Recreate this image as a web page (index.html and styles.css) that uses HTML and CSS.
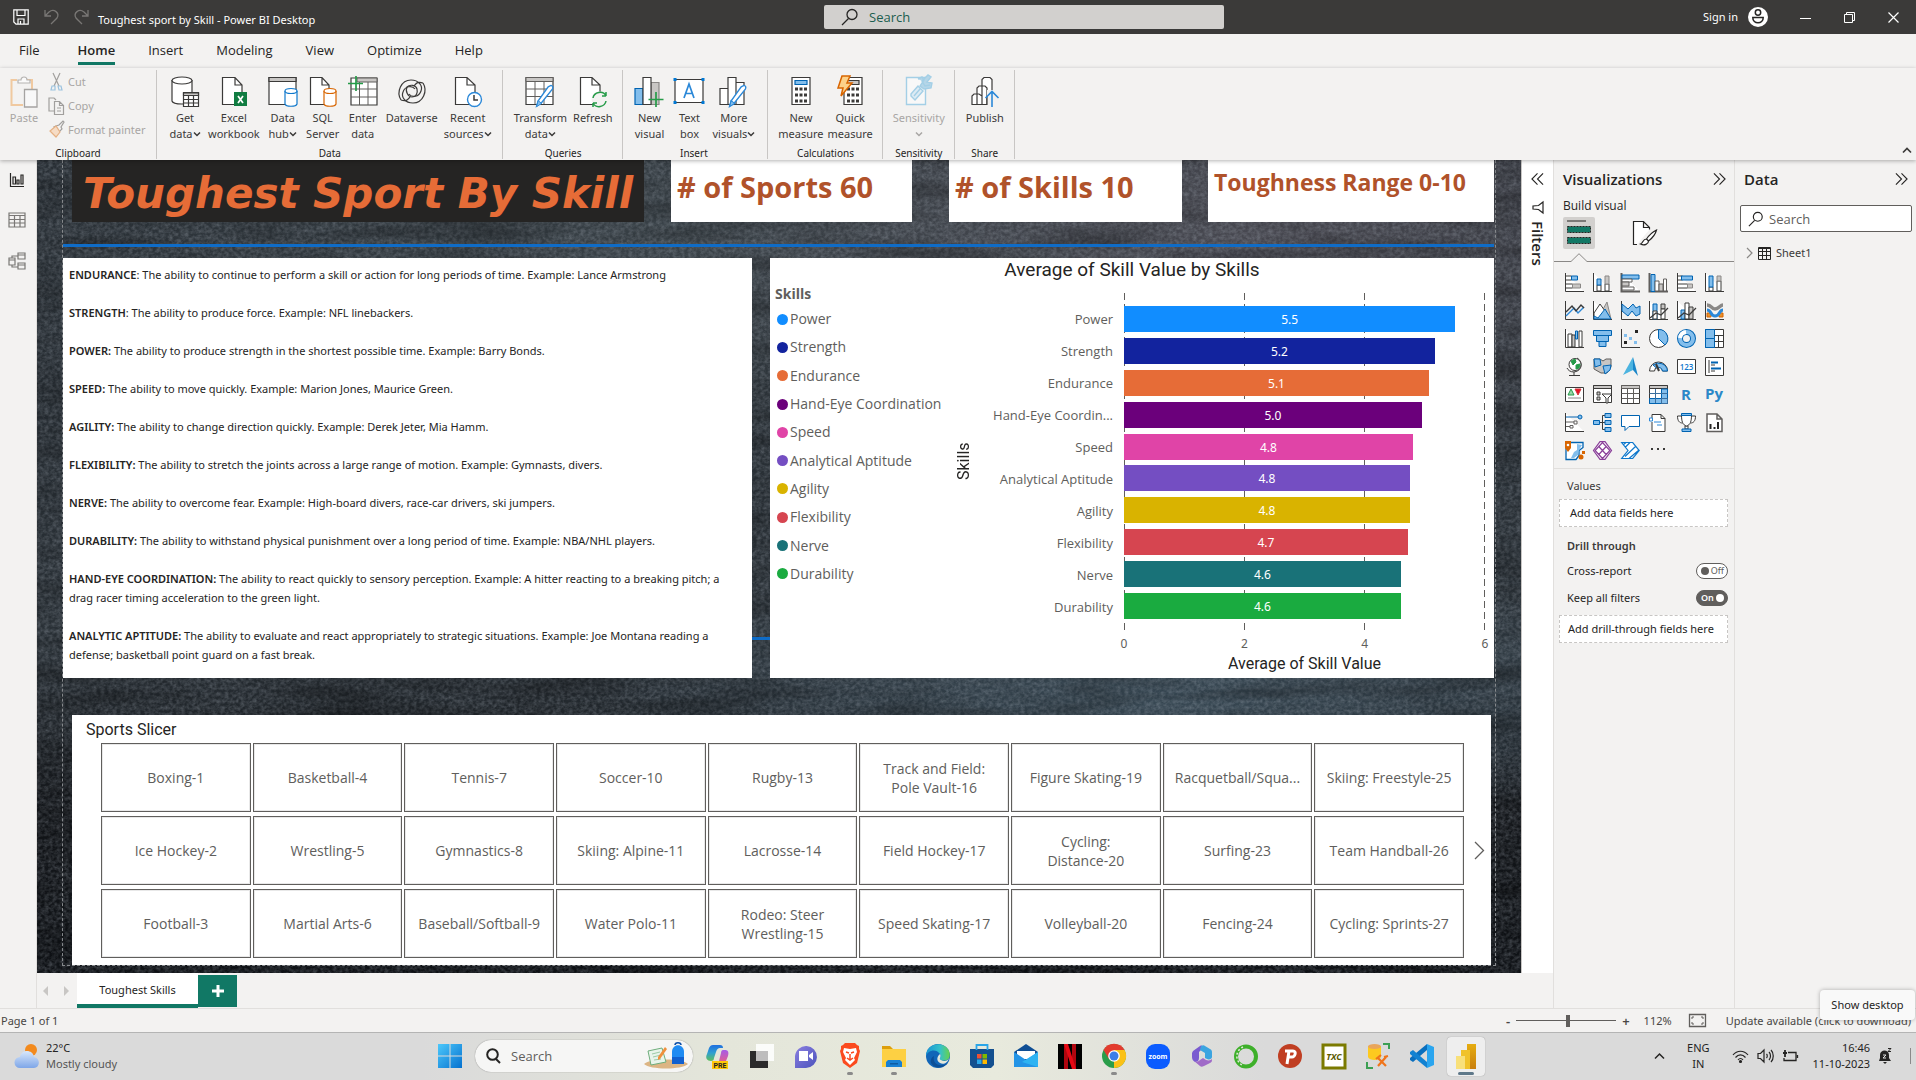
FILE: index.html
```html
<!DOCTYPE html>
<html lang="en">
<head>
<meta charset="utf-8">
<title>Toughest sport by Skill - Power BI Desktop</title>
<link rel="stylesheet" href="styles.css">
</head>
<body>
<svg class="defs" aria-hidden="true">
  <defs>
    <linearGradient id="gWin" x1="0" y1="0" x2="1" y2="1"><stop offset="0" stop-color="#4cc8fb"/><stop offset="1" stop-color="#0571cf"/></linearGradient>
    <linearGradient id="gCopA" x1="0" y1="0" x2="0" y2="1"><stop offset="0" stop-color="#1f6fe0"/><stop offset=".5" stop-color="#2f9fd0"/><stop offset="1" stop-color="#5fc05a"/></linearGradient>
    <linearGradient id="gCopB" x1="0" y1="0" x2="0" y2="1"><stop offset="0" stop-color="#a65be8"/><stop offset="1" stop-color="#f0607a"/></linearGradient>
    <linearGradient id="gChat" x1="0" y1="0" x2="1" y2="1"><stop offset="0" stop-color="#8b7fe0"/><stop offset="1" stop-color="#4b53bc"/></linearGradient>
    <linearGradient id="gEdge" x1="0" y1="0" x2="1" y2="0"><stop offset="0" stop-color="#1795d4"/><stop offset=".6" stop-color="#35c1c9"/><stop offset="1" stop-color="#68d34a"/></linearGradient>
    <linearGradient id="gBi" x1="0" y1="0" x2="0" y2="1"><stop offset="0" stop-color="#e6ad10"/><stop offset="1" stop-color="#c87e0e"/></linearGradient>
    <linearGradient id="gCloud" x1="0" y1="0" x2="0" y2="1"><stop offset="0" stop-color="#d9e8fb"/><stop offset="1" stop-color="#7ea6e8"/></linearGradient>
    <symbol id="chev" viewBox="0 0 8 8"><path d="M1 2.500l3 3 3-3" fill="none" stroke="currentColor" stroke-width="1.500"/></symbol>
    <symbol id="pen" viewBox="0 0 20 26"><path d="M17 1.500c2 .500 2.500 2 1.500 4L7 20l-5.500 4L3 18.500 14 3z" fill="#fff" stroke="#2b88d8" stroke-width="1.500"/><path d="M3 18l4 3-5.500 3.500z" fill="#83beec" stroke="#2b88d8"/></symbol>
    <symbol id="glass" viewBox="0 0 18 18"><circle cx="11" cy="6.500" r="5" fill="none" stroke="currentColor" stroke-width="1.300"/><path d="M7.500 10.500L1 17" stroke="currentColor" stroke-width="1.300"/></symbol>
    <symbol id="dbl" viewBox="0 0 14 14"><path d="M1 1l6 6-6 6M7 1l6 6-6 6" fill="none" stroke="currentColor" stroke-width="1.200"/></symbol>
  </defs>
</svg>

<header class="titlebar">
  <div class="title-left">
    <button class="bare" aria-label="Save"><svg width="16" height="16" viewBox="0 0 16 16" fill="none" stroke="#fff" stroke-width="1.200"><path d="M.8.800h14.400v14.400H3L.8 13z"/><path d="M4 1v5.500h8V1M5 15v-5h6v5M7.500 12v3"/></svg></button>
    <button class="bare" aria-label="Undo"><svg width="15" height="16" viewBox="0 0 15 16" fill="none" stroke="#797775" stroke-width="1.300"><path d="M1 1v6h6M1 7l4-4c5-4 11 1 8 6l-6 6"/></svg></button>
    <button class="bare" aria-label="Redo"><svg width="15" height="16" viewBox="0 0 15 16" fill="none" stroke="#797775" stroke-width="1.300"><path d="M14 1v6H8M14 7l-4-4C5-1-1 4 2 9l6 6"/></svg></button>
    <span class="doc-title">Toughest sport by Skill - Power BI Desktop</span>
  </div>
  <label class="top-search"><svg width="18" height="18"><use href="#glass"/></svg><input type="text" placeholder="Search" aria-label="Search"></label>
  <div class="title-right">
    <button class="bare signin">Sign in</button>
    <svg width="20" height="20" viewBox="0 0 20 20"><circle cx="10" cy="10" r="10" fill="#fff"/><circle cx="10" cy="5.500" r="2.700" fill="none" stroke="#252423" stroke-width="1.500"/><path d="M4.800 10.500h10.400c.3 7-10.700 7-10.400 0z" fill="none" stroke="#252423" stroke-width="1.500"/></svg>
    <div class="win-buttons">
      <button class="bare" aria-label="Minimize"><svg width="11" height="11"><path d="M0 6.500h11" stroke="#fff"/></svg></button>
      <button class="bare" aria-label="Restore"><svg width="11" height="11" fill="none" stroke="#fff"><path d="M.5 2.500h8v8h-8zM2.500 2V.500h8v8H9"/></svg></button>
      <button class="bare" aria-label="Close"><svg width="11" height="11"><path d="M.5.500l10 10M10.500.500l-10 10" stroke="#fff" stroke-width="1.200"/></svg></button>
    </div>
  </div>
</header>

<nav class="tabs">
  <a href="#file" class="file">File</a><a href="#home" class="active">Home</a><a href="#insert">Insert</a><a href="#modeling">Modeling</a><a href="#view">View</a><a href="#optimize">Optimize</a><a href="#help">Help</a>
</nav>

<section class="ribbon">
  <div class="group clip">
    <div class="group-body">
      <button class="rb off"><svg width="28" height="32" viewBox="0 0 28 32" fill="none" stroke="#f0c9a0" stroke-width="2"><path d="M7 4H1.500v25H13M17 4h5v9"/><path d="M8 7V4h3c0-4 6-4 6 0h3v3z" stroke="#b5b3b1" stroke-width="1.200" fill="#fafafa"/><path d="M14.500 13.500H27v17.500H14.500z" stroke="#a5a3a1" stroke-width="1.300" fill="#f8f8f8"/></svg><span>Paste</span></button>
      <div class="mini">
        <button class="mb"><svg width="17" height="20" viewBox="0 0 17 20" fill="none" stroke="#a19f9d" stroke-width="1.200"><path d="M5 1l6 13M12 1L6 14"/><path d="M4 14h3v4H3zM10 14h3l1 4h-3z" stroke="#9cc3e0"/></svg>Cut</button>
        <button class="mb"><svg width="17" height="20" viewBox="0 0 17 20" fill="none" stroke="#a19f9d" stroke-width="1.200"><path d="M6 15H1V2h5l2 2"/><path d="M6.500 5.500h5l4 4v9h-9zM11.500 5.500v4h4M9 12h4M9 15h4"/></svg>Copy</button>
        <button class="mb"><svg width="17" height="20" viewBox="0 0 17 20" fill="none" stroke="#a19f9d" stroke-width="1.200"><path d="M8 6l3-1 4-4 1 1-3 5 1 2-3 3-5-5z"/><path d="M8 6l-6 5 6 6 4-5z" stroke="#e5b184" fill="#f6dcc5"/></svg>Format painter</button>
      </div>
    </div>
    <div class="group-name">Clipboard</div>
  </div>
  <div class="group">
    <div class="group-body">
      <button class="rb"><svg width="28" height="32" viewBox="0 0 28 32" fill="#fff" stroke="#3b3a39" stroke-width="1.200"><path d="M1 4v21c1 4 19 4 20 0V4"/><ellipse cx="11" cy="4.500" rx="10" ry="3.500"/><path d="M12.500 16.500h15v14h-15z"/><path d="M12.500 17h15v2.500h-15z" fill="#c8c6c4"/><path d="M12.500 23.500h15M12.500 27h15M17.500 20v10M22.500 20v10"/></svg><span>Get</span><span>data<svg class="cv"><use href="#chev"/></svg></span></button>
      <button class="rb"><svg width="28" height="32" viewBox="0 0 28 32" fill="#fff" stroke="#3b3a39" stroke-width="1.200"><path d="M15 1.500H2.500v27H22V9zM15 1.500V9h7"/><path d="M14 16h13v14H14z" fill="#107c41" stroke="none"/><path d="M18 20l5 7M23 20l-5 7" stroke-width="1.700" stroke="#fff"/></svg><span>Excel</span><span>workbook</span></button>
      <button class="rb"><svg width="30" height="32" viewBox="0 0 30 32" fill="#fff" stroke="#3b3a39" stroke-width="1.200"><path d="M1 1.500h27v27H1z"/><path d="M1 1.500h27v4H1z" fill="#c8c6c4"/><path d="M17 15v13c1 3 11 3 12 0V15" stroke="#0f78cc"/><ellipse cx="23" cy="15" rx="6" ry="2.500" stroke="#0f78cc"/></svg><span>Data</span><span>hub<svg class="cv"><use href="#chev"/></svg></span></button>
      <button class="rb"><svg width="28" height="32" viewBox="0 0 28 32" fill="#fff" stroke="#3b3a39" stroke-width="1.200"><path d="M13 1.500H1.500v27H20V9zM13 1.500V9h7"/><path d="M15 15v13c1 3 11 3 12 0V15" stroke="#d86500"/><ellipse cx="21" cy="15" rx="6" ry="2.500" stroke="#d86500"/></svg><span>SQL</span><span>Server</span></button>
      <button class="rb"><svg width="30" height="32" viewBox="0 0 30 32" fill="#fff" stroke="#605e5c" stroke-width="1"><path d="M3 2h26v27H3z" stroke="#3b3a39" stroke-width="1.200"/><path d="M9 2h20v4H9z" fill="#c8c6c4"/><path d="M3 13h26M3 21h26M11.500 6v23M20 6v23"/><path d="M8 0v15M0 7.500h15" stroke="#259b48" stroke-width="1.700"/></svg><span>Enter</span><span>data</span></button>
      <button class="rb"><svg width="30" height="32" viewBox="0 0 30 32" fill="none" stroke="#3b3a39" stroke-width="1.200"><path d="M4 24C-1 16 4 4 14 4c8 0 12 6 10 11-2 6-9 7-12 3M26 7c5 8 0 20-10 20-8 0-12-6-10-11 2-6 9-7 12-3"/><path d="M4 24c6 2 7-1 9-3M26 7c-6-2-7 1-9 3"/><path d="M10 11c3-3 9-2 10 2s-1 8-5 8-7-6-5-10z"/></svg><span>Dataverse</span></button>
      <button class="rb"><svg width="28" height="32" viewBox="0 0 28 32" fill="#fff" stroke="#3b3a39" stroke-width="1.200"><path d="M13 1.500H1.500v27H21V9zM13 1.500V9h8"/><circle cx="20.500" cy="23.500" r="7" stroke="#2b88d8" stroke-width="1.400"/><path d="M20 19v5h4" fill="none" stroke-width="1.500"/></svg><span>Recent</span><span>sources<svg class="cv"><use href="#chev"/></svg></span></button>
    </div>
    <div class="group-name">Data</div>
  </div>
  <div class="group">
    <div class="group-body">
      <button class="rb"><svg width="30" height="32" viewBox="0 0 30 32" fill="#fff" stroke="#605e5c"><path d="M1 1.500h27v27H1z" stroke="#3b3a39" stroke-width="1.200"/><path d="M1 1.500h27v4H1z" fill="#c8c6c4"/><path d="M1 13h27M1 20.500h27M10 6v22M19 6v22"/><use href="#pen" x="9" y="8" width="21" height="24"/></svg><span>Transform</span><span>data<svg class="cv"><use href="#chev"/></svg></span></button>
      <button class="rb"><svg width="28" height="32" viewBox="0 0 28 32" fill="#fff" stroke="#3b3a39" stroke-width="1.200"><path d="M13 1.500H1.500v27H21V9zM13 1.500V9h8"/><circle cx="20.500" cy="23.500" r="8" fill="#f3f2f1" stroke="none"/><path d="M14 22c1-6 10-8 13-2v-4M27 20h-4M27 25c-1 6-10 8-13 2v4M14 27h4" fill="none" stroke="#259b48" stroke-width="1.500"/></svg><span>Refresh</span></button>
    </div>
    <div class="group-name">Queries</div>
  </div>
  <div class="group insert">
    <div class="group-body">
      <button class="rb"><svg width="30" height="32" viewBox="0 0 30 32" fill="#fff" stroke="#3b3a39" stroke-width="1.200"><path d="M17 6.500h8v22h-8z" fill="#c8c6c4" stroke="#8a8886"/><path d="M1 12.500h8v16H1z" fill="#83beec" stroke="#0063b1"/><path d="M9 1.500h8v27H9z"/><path d="M22 16v15M14.500 23.500h15" stroke="#259b48" stroke-width="1.700"/></svg><span>New</span><span>visual</span></button>
      <button class="rb"><svg width="32" height="32" viewBox="0 0 32 32" fill="#fff" stroke="#3b3a39" stroke-width="1.200"><path d="M2 3.500h28v23H2z"/><path d="M11 22l5-14 5 14M13 17.500h6" fill="none" stroke="#2b88d8" stroke-width="1.700"/><path d="M.5 2h3v3h-3zM28.500 2h3v3h-3zM.5 25h3v3h-3zM28.500 25h3v3h-3z" fill="#0078d4" stroke="none"/></svg><span>Text</span><span>box</span></button>
      <button class="rb"><svg width="30" height="32" viewBox="0 0 30 32" fill="#fff" stroke="#3b3a39" stroke-width="1.200"><path d="M17 6.500h8v22h-8zM1 12.500h8v16H1zM9 1.500h8v27H9z"/><use href="#pen" x="8" y="8" width="21" height="24"/></svg><span>More</span><span>visuals<svg class="cv"><use href="#chev"/></svg></span></button>
    </div>
    <div class="group-name">Insert</div>
  </div>
  <div class="group tight">
    <div class="group-body">
      <button class="rb"><svg width="20" height="32" viewBox="0 0 20 32" fill="#fff" stroke="#3b3a39" stroke-width="1.200"><path d="M1 1.500h18v27H1z"/><path d="M4 4.500h12v4H4z" fill="#83beec" stroke="#0063b1"/><path d="M4 13h12M4 19h12M4 25h12" stroke-width="3" stroke-dasharray="3 1.500"/></svg><span>New</span><span>measure</span></button>
      <button class="rb"><svg width="28" height="32" viewBox="0 0 28 32" fill="#fff" stroke="#3b3a39" stroke-width="1.200"><path d="M8 1.500h18v27H8z"/><path d="M11 4.500h12v4H11z" fill="#c8c6c4"/><path d="M11 13h12M11 19h12M11 25h12" stroke-width="3" stroke-dasharray="3 1.500"/><path d="M6 0h8l-3 7h5L5 20l2-8H2z" fill="#fcd28a" stroke="#d86500" stroke-width="1.500"/></svg><span>Quick</span><span>measure</span></button>
    </div>
    <div class="group-name">Calculations</div>
  </div>
  <div class="group tight">
    <div class="group-body">
      <button class="rb off"><svg width="28" height="32" viewBox="0 0 28 32" fill="#f8f8f8" stroke="#a3cfe6" stroke-width="1.400"><path d="M1.500 1.500h19v27h-19z"/><path d="M6 18l7-8 5 5-8 9-4-4zM9 20l6-7" fill="#dcebf4"/><path d="M13 3l4-2 2 3-4 6 4 3 7-1 1-5-5-1 4-5-3-2-6 6 3 5 5-1" fill="#b5d6e8"/></svg><span>Sensitivity</span><span><svg class="cv"><use href="#chev"/></svg></span></button>
    </div>
    <div class="group-name">Sensitivity</div>
  </div>
  <div class="group">
    <div class="group-body">
      <button class="rb"><svg width="28" height="32" viewBox="0 0 28 32" fill="#fff" stroke="#3b3a39" stroke-width="1.200"><path d="M11 28.500v-25l2-2h6l2 2v25zM6 28.500V12l2-2h6l2 2v16.500zM1 28.500V20l2-2h5l3 2v8.500z"/><path d="M16 14h9v16h-9z" fill="#f3f2f1" stroke="none"/><path d="M11 28.500h5V20" fill="none"/><path d="M21 31V16M14.500 22l6.500-6.500 6.500 6.500" stroke="#2b88d8" stroke-width="1.600" fill="none"/></svg><span>Publish</span></button>
    </div>
    <div class="group-name">Share</div>
  </div>
  <button class="bare collapse" aria-label="Collapse ribbon"><svg width="10" height="8"><path d="M1 6.500l4-4 4 4" fill="none" stroke="#3b3a39" stroke-width="1.700"/></svg></button>
</section>

<main class="work">
  <nav class="rail">
    <button class="bare" aria-label="Report view"><svg width="16" height="16" viewBox="0 0 16 16" fill="none" stroke="#252423" stroke-width="1.200"><path d="M1.500 1v13.500H15M4 5h2.500v7H4zM8 8h2v4H8zM12 3h2v9h-2z"/></svg></button>
    <button class="bare" aria-label="Table view"><svg width="18" height="16" viewBox="0 0 18 16" fill="none" stroke="#797775" stroke-width="1.200"><path d="M1 1h16v14H1zM1 3.500h16M1 7.500h16M1 11h16M6.500 3.500V15M12 3.500V15"/></svg></button>
    <button class="bare" aria-label="Model view"><svg width="18" height="18" viewBox="0 0 18 18" fill="none" stroke="#797775" stroke-width="1.200"><path d="M10 1h7v6h-7zM10 3h7M1 6h6v7H1zM1 8h6M10 11h7v6h-7zM10 13h7M4 6V4h6M4 13v2h6"/></svg></button>
  </nav>

  <div class="center">
    <div class="stage">
      <div class="canvas">
        <svg class="grain" width="100%" height="100%" aria-hidden="true">
          <filter id="fine" x="0" y="0" width="100%" height="100%"><feTurbulence type="fractalNoise" baseFrequency=".25 .3" numOctaves="3" seed="4"/><feColorMatrix values="0 0 0 0 .5  0 0 0 0 .55  0 0 0 0 .62  .8 0 0 0 -.24"/></filter>
          <filter id="weave" x="0" y="0" width="100%" height="100%"><feTurbulence type="fractalNoise" baseFrequency=".008 .05" numOctaves="3" seed="9"/><feColorMatrix values="0 0 0 0 0  0 0 0 0 0  0 0 0 0 0  1 0 0 0 -.4"/></filter>
          <rect width="100%" height="100%" filter="url(#fine)"/>
          <rect width="100%" height="100%" filter="url(#weave)"/>
        </svg>
        <div class="page">
          <div class="row-top">
            <h1 class="banner">Toughest Sport By Skill</h1>
            <div class="card">#&nbsp;of Sports 60</div>
            <div class="card">#&nbsp;of Skills 10</div>
            <div class="card small">Toughness Range 0-10</div>
          </div>
          <div class="rule"></div>
          <div class="row-mid">
            <div class="notes">
              <p><b>ENDURANCE</b>: The ability to continue to perform a skill or action for long periods of time. Example: Lance Armstrong</p>
              <p><b>STRENGTH</b>: The ability to produce force. Example: NFL linebackers.</p>
              <p><b>POWER:</b> The ability to produce strength in the shortest possible time. Example: Barry Bonds.</p>
              <p><b>SPEED:</b> The ability to move quickly. Example: Marion Jones, Maurice Green.</p>
              <p><b>AGILITY:</b> The ability to change direction quickly. Example: Derek Jeter, Mia Hamm.</p>
              <p><b>FLEXIBILITY:</b> The ability to stretch the joints across a large range of motion. Example: Gymnasts, divers.</p>
              <p><b>NERVE:</b> The ability to overcome fear. Example: High-board divers, race-car drivers, ski jumpers.</p>
              <p><b>DURABILITY:</b> The ability to withstand physical punishment over a long period of time. Example: NBA/NHL players.</p>
              <p><b>HAND-EYE COORDINATION:</b> The ability to react quickly to sensory perception. Example: A hitter reacting to a breaking pitch; a drag racer timing acceleration to the green light.</p>
              <p><b>ANALYTIC APTITUDE:</b> The ability to evaluate and react appropriately to strategic situations. Example: Joe Montana reading a defense; basketball point guard on a fast break.</p>
            </div>
            <div class="link"></div>
            <div class="chart">
              <h2>Average of Skill Value by Skills</h2>
              <div class="chart-body">
                <div class="legend">
                  <strong>Skills</strong>
                  <ul>
                    <li><i class="c1"></i>Power</li><li><i class="c2"></i>Strength</li><li><i class="c3"></i>Endurance</li><li><i class="c4"></i>Hand-Eye Coordination</li><li><i class="c5"></i>Speed</li><li><i class="c6"></i>Analytical Aptitude</li><li><i class="c7"></i>Agility</li><li><i class="c8"></i>Flexibility</li><li><i class="c9"></i>Nerve</li><li><i class="c10"></i>Durability</li>
                  </ul>
                </div>
                <div class="y-title">Skills</div>
                <ul class="y-labels"><li>Power</li><li>Strength</li><li>Endurance</li><li>Hand-Eye Coordin...</li><li>Speed</li><li>Analytical Aptitude</li><li>Agility</li><li>Flexibility</li><li>Nerve</li><li>Durability</li></ul>
                <div class="plot-col">
                  <div class="plot">
                    <div class="bar c1" style="width:91.800%">5.5</div>
                    <div class="bar c2" style="width:86.100%">5.2</div>
                    <div class="bar c3" style="width:84.500%">5.1</div>
                    <div class="bar c4" style="width:82.500%">5.0</div>
                    <div class="bar c5" style="width:80%">4.8</div>
                    <div class="bar c6" style="width:79.200%">4.8</div>
                    <div class="bar c7" style="width:79.200%">4.8</div>
                    <div class="bar c8" style="width:78.600%">4.7</div>
                    <div class="bar c9" style="width:76.700%">4.6</div>
                    <div class="bar c10" style="width:76.700%">4.6</div>
                  </div>
                  <div class="ticks"><span>0</span><span>2</span><span>4</span><span>6</span></div>
                  <div class="x-title">Average of Skill Value</div>
                </div>
              </div>
            </div>
          </div>
          <div class="slicer">
            <h2>Sports Slicer</h2>
            <div class="slicer-body">
              <div class="tiles">
                <button>Boxing-1</button><button>Ice Hockey-2</button><button>Football-3</button>
                <button>Basketball-4</button><button>Wrestling-5</button><button>Martial Arts-6</button>
                <button>Tennis-7</button><button>Gymnastics-8</button><button>Baseball/Softball-9</button>
                <button>Soccer-10</button><button>Skiing: Alpine-11</button><button>Water Polo-11</button>
                <button>Rugby-13</button><button>Lacrosse-14</button><button>Rodeo: Steer<br>Wrestling-15</button>
                <button>Track and Field:<br>Pole Vault-16</button><button>Field Hockey-17</button><button>Speed Skating-17</button>
                <button>Figure Skating-19</button><button>Cycling:<br>Distance-20</button><button>Volleyball-20</button>
                <button>Racquetball/Squa...</button><button>Surfing-23</button><button>Fencing-24</button>
                <button>Skiing: Freestyle-25</button><button>Team Handball-26</button><button>Cycling: Sprints-27</button>
              </div>
              <button class="bare next" aria-label="Next"><svg width="11" height="19"><path d="M1 1l8.500 8.500L1 18" fill="none" stroke="#605e5c" stroke-width="1.300"/></svg></button>
            </div>
          </div>
        </div>
      </div>
      <aside class="filters">
        <svg class="flip" width="13" height="14"><use href="#dbl"/></svg>
        <svg width="12" height="13" viewBox="0 0 12 13"><path d="M11 1v11L6.500 8.500 1 8V5l5.500-.500z" fill="none" stroke="#252423" stroke-width="1.200"/></svg>
        <span>Filters</span>
      </aside>
    </div>
    <div class="page-tabs">
      <button class="bare" aria-label="Previous page"><svg width="5" height="10"><path d="M5 0v10L0 5z" fill="#c8c6c4"/></svg></button>
      <button class="bare" aria-label="Next page"><svg width="5" height="10"><path d="M0 0v10l5-5z" fill="#c8c6c4"/></svg></button>
      <button class="page-tab">Toughest Skills</button>
      <button class="add-page" aria-label="New page"><svg width="12" height="12"><path d="M6 0v12M0 6h12" stroke="#fff" stroke-width="3"/></svg></button>
    </div>
  </div>

  <aside class="pane viz">
    <div class="pane-head"><h2>Visualizations</h2><svg width="13" height="14"><use href="#dbl"/></svg></div>
    <h3>Build visual</h3>
    <div class="modes">
      <button class="mode on" aria-label="Build visual"><svg width="24" height="26" viewBox="0 0 24 26"><path d="M0 1h19" stroke="#252423"/><path d="M.5 6.500h23v6H.5zM.5 17.500h23v6H.5z" fill="#117865" stroke="#252423" stroke-dasharray="2 1"/></svg></button>
      <button class="mode" aria-label="Format visual"><svg width="26" height="26" viewBox="0 0 26 26" fill="#fff" stroke="#252423" stroke-width="1.200"><path d="M5 24.500H1.500v-23h10l6 6v2M11.500 1.500v6h6"/><path d="M24.500 10c-4 2-8 6-10 9l2 2c4-3 7-7 8-11zM14.500 19c-4 0-3 4-6 5 4 2 8 0 8-3z"/></svg></button>
    </div>
    <div class="notch"><svg width="16" height="9" viewBox="0 0 16 9" aria-hidden="true"><path d="M0 8.500h16" stroke="#f3f2f1" stroke-width="2"/><path d="M0 8.500L8 .700l8 7.800" fill="none" stroke="#8a8886"/></svg></div>
    <div class="gallery">
      <svg viewBox="0 0 19 19" fill="#fff" stroke="#3b3a39"><path d="M.5 0v18.500H19"/><path d="M.5 3h6v4h-6zM.5 11h7v4h-7z"/><path d="M6.500 3h6v4h-6z" fill="#83beec" stroke="#0063b1"/><path d="M7.500 11h8v4h-8z" fill="#c8c6c4" stroke="#8a8886"/></svg>
      <svg viewBox="0 0 19 19" fill="#fff" stroke="#3b3a39"><path d="M.5 0v18.500H19"/><path d="M4 12h4v6H4zM12 11h4v7h-4z"/><path d="M4 6h4v6H4z" fill="#83beec" stroke="#0063b1"/><path d="M12 3h4v8h-4z" fill="#c8c6c4" stroke="#8a8886"/></svg>
      <svg viewBox="0 0 19 19" fill="#fff" stroke="#605e5c"><path d="M.5 0v18.500H19" stroke-width="2"/><path d="M1 2h17v4H1z" fill="#83beec" stroke="#0063b1"/><path d="M1 6h10v3H1zM1 14h12v3H1z"/><path d="M1 9h7v4H1z" fill="#c8c6c4"/></svg>
      <svg viewBox="0 0 19 19" fill="#fff" stroke="#605e5c"><path d="M.5 0v18.500H19" stroke-width="2"/><path d="M2 1.500h4v17H2z" fill="#83beec" stroke="#0063b1"/><path d="M6 8h4v10H6zM14.500 6h3v12h-3z"/><path d="M10 11h4v7h-4z" fill="#c8c6c4"/></svg>
      <svg viewBox="0 0 19 19" fill="#fff" stroke="#3b3a39"><path d="M.5 0v18.500H19"/><path d="M.5 3h5v4h-5zM.5 11h10v4H.5z"/><path d="M4.500 3h11v4h-11z" fill="#83beec" stroke="#0063b1"/><path d="M10.500 11h5v4h-5z" fill="#c8c6c4" stroke="#8a8886"/></svg>
      <svg viewBox="0 0 19 19" fill="#fff" stroke="#3b3a39"><path d="M.5 0v18.500H19"/><path d="M4 14h4v4H4zM12 8h4v10h-4z"/><path d="M4 3h4v11H4z" fill="#83beec" stroke="#0063b1"/><path d="M12 3h4v5h-4z" fill="#c8c6c4" stroke="#8a8886"/></svg>

      <svg viewBox="0 0 19 19" fill="none" stroke="#3b3a39"><path d="M.5 0v18.500H19"/><path d="M1 15l8-8 4 5 6-6" stroke="#2b88d8" stroke-width="1.400"/><path d="M1 11l6-6 4 5 5-6 3 3" stroke-width="1.400"/></svg>
      <svg viewBox="0 0 19 19" fill="#fff" stroke="#3b3a39"><path d="M.5 0v18.500H19"/><path d="M9 10l5-9 4 17z" fill="#c8c6c4" stroke="#8a8886"/><path d="M1 12l6-9 5 7-6 8H1z"/><path d="M1 15l4 2 7-9 6 10H1z" fill="#83beec" stroke="#0063b1"/></svg>
      <svg viewBox="0 0 19 19" fill="none" stroke="#3b3a39"><path d="M.5 0v18.500H19"/><path d="M1 3l6 5 5-5 3 4 4-2v8l-4 2-4-5-4 5-6-5z" fill="#83beec" stroke="#0063b1"/></svg>
      <svg viewBox="0 0 19 19" fill="#fff" stroke="#3b3a39"><path d="M.5 0v18.500H19"/><path d="M4 3h4v15H4z" fill="#83beec" stroke="#0063b1"/><path d="M12 3h4v5h-4z" fill="#c8c6c4"/><path d="M12 8h4v10h-4zM4 10h4v8H4z"/><path d="M1 17l6-5 5 2 7-7" fill="none" stroke-width="1.300"/></svg>
      <svg viewBox="0 0 19 19" fill="#fff" stroke="#3b3a39"><path d="M.5 0v18.500H19"/><path d="M4 9h4v9H4z" fill="#83beec" stroke="#0063b1"/><path d="M8 2h4v16H8z"/><path d="M12 6h4v12h-4z" fill="#c8c6c4"/><path d="M1 17l6-5 5 2 7-7" fill="none" stroke-width="1.300"/></svg>
      <svg viewBox="0 0 19 19" fill="none" stroke="#3b3a39"><path d="M.5 0v18.500H19"/><path d="M2 12h4v4H2zM14 12h4v4h-4z" fill="#e8912d" stroke="#d86500"/><path d="M2 4c5 0 4 4 8 4s5-4 8-4" stroke="#8a8886" stroke-width="3.500"/><path d="M2 9c5 0 3 6 8 6s4-6 8-6" stroke="#2b88d8" stroke-width="3"/></svg>

      <svg viewBox="0 0 19 19" fill="#fff" stroke="#3b3a39"><path d="M.5 0v18.500H19"/><path d="M3 5h4v13H3zM14 2h3v16h-3z"/><path d="M7 6h3v12H7z" fill="#c8c6c4"/><path d="M10.500 2h2v8h-2z" fill="#83beec" stroke="#0063b1"/></svg>
      <svg viewBox="0 0 19 19" fill="#83beec" stroke="#0063b1"><path d="M.5 1.500h18v5H.5zM3.500 6.500h12v6h-12zM6 12.500h7v5H6z"/></svg>
      <svg viewBox="0 0 19 19" fill="none" stroke="#3b3a39"><path d="M.5 0v18.500H19"/><path d="M3 5h3v3H3zM8 8h3v3H8zM13 12h3v3h-3z" fill="#83beec" stroke="none"/><path d="M14 1h3v3h-3zM3 12h3v3H3z" fill="#252423" stroke="none"/></svg>
      <svg viewBox="0 0 19 19" fill="#fff" stroke="#3b3a39"><circle cx="9.500" cy="9.500" r="9"/><path d="M9.500.500a9 9 0 0 1 6.500 15.500L9.500 9.500z" fill="#83beec" stroke="#0063b1"/></svg>
      <svg viewBox="0 0 19 19" fill="none"><circle cx="9.500" cy="9.500" r="6.500" stroke="#0063b1" stroke-width="6"/><circle cx="9.500" cy="9.500" r="6.500" stroke="#83beec" stroke-width="4"/><path d="M3 9A7 7 0 0 1 9 3" stroke="#fff" stroke-width="4"/></svg>
      <svg viewBox="0 0 19 19" fill="#fff" stroke="#3b3a39"><path d="M.5.500h18v18H.5z"/><path d="M.5.500h9v9h-9zM.5 9.500h9v9h-9z" fill="#83beec" stroke="#0063b1"/><path d="M9.500 6.500h9M9.500 12.500h9M13.500 6.500v12"/></svg>

      <svg viewBox="0 0 19 19" fill="#fff" stroke="#3b3a39"><path d="M12 1c6 3 6 13-3 14-4 0-6-2-7-4M9 15v3M4 18.500h11" fill="none"/><circle cx="10" cy="7.500" r="6"/><path d="M6 4l4-2 1 3-3 3zM11 8l4-1-1 4-3 1z" fill="#259b48" stroke="#259b48"/></svg>
      <svg viewBox="0 0 19 19" fill="#c8c6c4" stroke="#605e5c"><path d="M1 2h6l3 2 3-2h5v8l-4 6H8L1 12z"/><path d="M1 2h6l1 6-6 2zM10 9l8-1-1 5-5 4z" fill="#83beec" stroke="#0063b1"/></svg>
      <svg viewBox="0 0 19 19"><path d="M12 0L2 18l10-5z" fill="#4cb4e0"/><path d="M12 0l5 19-5-6z" fill="#1a86c8"/></svg>
      <svg viewBox="0 0 19 19" fill="#fff" stroke="#3b3a39"><path d="M.5 14a9 9 0 0 1 18 0h-5a4 4 0 0 0-8 0z"/><path d="M4 8a9 9 0 0 1 14.500 6h-5a4 4 0 0 0-6-3z" fill="#83beec" stroke="#0063b1"/><path d="M10 14L7 7" stroke-width="2"/></svg>
      <svg viewBox="0 0 19 19" fill="#fff" stroke="#3b3a39"><path d="M.5 2.500h18v14H.5z"/><text x="9.500" y="13" text-anchor="middle" class="n123">123</text></svg>
      <svg viewBox="0 0 19 19" fill="#fff" stroke="#3b3a39"><path d="M.5.500h18v18H.5zM4 3v13"/><path d="M6 5.500h7M6 11.500h10" stroke="#0063b1" stroke-width="2"/><path d="M6 8h4M6 14h4"/></svg>

      <svg viewBox="0 0 19 19" fill="#fff" stroke="#3b3a39"><path d="M.5 2.500h18v14H.5z"/><path d="M3 10l3-6 3 6z" fill="#9bd3a8" stroke="#259b48"/><path d="M10 4h6l-3 6z" fill="#e81123" stroke="#d13438"/><path d="M3 13h13" stroke="#8a8886"/></svg>
      <svg viewBox="0 0 19 19" fill="#fff" stroke="#3b3a39"><path d="M.5.500h18v17H.5z"/><path d="M.5.500h18v3H.5z" fill="#c8c6c4"/><path d="M4 7h3v3H4zM4 12h3v3H4z" fill="#c8c6c4"/><path d="M9 9h10l-4 4v5h-2v-5z"/></svg>
      <svg viewBox="0 0 19 19" fill="#fff" stroke="#605e5c"><path d="M.5.500h18v18H.5z" stroke="#3b3a39"/><path d="M.5.500h18v3H.5z" fill="#c8c6c4"/><path d="M.5 8.500h18M.5 13.500h18M6.500 4v14M12.500 4v14"/></svg>
      <svg viewBox="0 0 19 19" fill="#fff" stroke="#3b3a39"><path d="M.5.500h18v18H.5z"/><path d="M.5.500h18v3H.5z" fill="#c8c6c4"/><path d="M12.500 4h6v14.500H.5v-5h12z" fill="#83beec" stroke="#0063b1"/><path d="M.5 8.500h18M6.500 4v14M12.500 13.500h6v5h-6z" fill="none" stroke="#3b6f9e"/></svg>
      <svg viewBox="0 0 19 19"><text x="9" y="15" text-anchor="middle" class="nR">R</text></svg>
      <svg viewBox="0 0 19 19"><text x="9" y="14" text-anchor="middle" class="nR">Py</text></svg>

      <svg viewBox="0 0 19 19" fill="#fff" stroke="#3b3a39"><path d="M.5 0v18.500H19"/><path d="M1 4h12" stroke="#0063b1"/><path d="M1 9h9M1 13.500h5" stroke="#605e5c"/><circle cx="15" cy="4" r="2" fill="#83beec" stroke="#0063b1"/><path d="M9 8h3v3H9zM5 12.500h3v2.500H5z" stroke="#605e5c"/></svg>
      <svg viewBox="0 0 19 19" fill="#83beec" stroke="#0063b1"><path d="M7 9.500h2.500v-7H12M9.500 9.500v7H12M9 9.500h3" fill="none" stroke="#3b3a39"/><path d="M.5 7.500h6v4h-6zM12 .500h6v4h-6zM12 7.500h6v4h-6zM12 14.500h6v4h-6z"/></svg>
      <svg viewBox="0 0 19 19" fill="#fff" stroke="#0063b1"><path d="M.5 2.500h18v11H8l-4 4v-4H.5z"/></svg>
      <svg viewBox="0 0 19 19" fill="#fff" stroke="#3b3a39"><path d="M3 5V1.500h9l4 4v13H3V9M12 1.500v4h4"/><path d="M.5 5h3v3h-3zM5 9h7M8 12h5" stroke="#2b88d8"/></svg>
      <svg viewBox="0 0 19 19" fill="#fff" stroke="#3b3a39"><path d="M4 3H.5c0 5 2 7 5 7M15 3h3.500c0 5-2 7-5 7M8 13h3v3H8z"/><path d="M4.500 2h10c0 6-1 10-5 11-4-1-5-5-5-11z"/><path d="M4.500.500h10v2h-10zM5 16h9v2.500H5z" fill="#83beec" stroke="#0063b1"/></svg>
      <svg viewBox="0 0 19 19" fill="#fff" stroke="#605e5c" stroke-width="1.500"><path d="M2 1h10l5 5v12.500H2zM12 1v5h5"/><path d="M5.500 11v5M9.500 14v2M13 9v7" stroke="#252423" stroke-width="2"/></svg>

      <svg viewBox="0 0 19 19" fill="#fff" stroke="#0063b1"><path d="M1 1.500h17v5l-4 3v5l-3 4H1z" stroke-width="1.300"/><path d="M12 3l5 1-3 5-1 5-4 3H6l3-6 3-2z" fill="#83beec" stroke="none"/><path d="M0 0h6v7l-3 4-3-4z" fill="#d86500" stroke="none"/><circle cx="3" cy="4" r="1.300" stroke="none"/><circle cx="16" cy="16" r="2.500" fill="#d86500" stroke="none"/><path d="M17 10h3v3h-3z" fill="#d86500" stroke="none"/></svg>
      <svg viewBox="0 0 19 19" fill="#fff" stroke="#8a3f99" stroke-width="1.200"><path d="M7 .700h5L18.500 9.500 12 18.300H7L.5 9.500z"/><path d="M9.500 1.500l3.700 4-3.700 4-3.700-4zM9.500 9.500l3.700 4-3.700 4-3.700-4zM5.800 5.500l3.700 4-3.700 4-3.700-4zM13.200 5.500l3.700 4-3.700 4-3.700-4z"/></svg>
      <svg viewBox="0 0 19 19" fill="#fff" stroke="#0f78cc" stroke-width="1.200"><path d="M.7 1.500h11l6.500 8-6.500 8H.7l6.300-8zM5 1.500l-3 2.500M9 1.500L4.500 6M4 15.500L15 5M8 17.500L18 9"/></svg>
      <svg viewBox="0 0 19 19" fill="#3b3a39"><path d="M2 7h2v2H2zM8 7h2v2H8zM14 7h2v2h-2z"/></svg>
    </div>
    <div class="wells">
      <h4 class="plain">Values</h4>
      <div class="well">Add data fields here</div>
      <h4>Drill through</h4>
      <label class="tg">Cross-report<input type="checkbox"><span class="sw">Off</span></label>
      <label class="tg">Keep all filters<input type="checkbox" checked><span class="sw">On</span></label>
      <div class="well low">Add drill-through fields here</div>
    </div>
  </aside>

  <aside class="pane data">
    <div class="pane-head"><h2>Data</h2><svg width="13" height="14"><use href="#dbl"/></svg></div>
    <label class="data-search"><svg width="16" height="16"><use href="#glass"/></svg><input type="text" placeholder="Search" aria-label="Search fields"></label>
    <a href="#sheet1" class="tree"><svg width="7" height="12"><path d="M1 1l5 5-5 5" fill="none" stroke="#8a8886" stroke-width="1.200"/></svg><svg width="13" height="13" viewBox="0 0 13 13" fill="none" stroke="#252423"><path d="M.5.500h12v12H.5zM.5 1.500h12M.5 4.500h12M.5 8.500h12M4.500 1v11M8.500 1v11"/></svg>Sheet1</a>
  </aside>
</main>

<footer class="status">
  <span>Page 1 of 1</span>
  <div class="status-right">
    <button class="bare sign" aria-label="Zoom out">-</button>
    <input type="range" min="0" max="100" value="52" aria-label="Zoom">
    <button class="bare sign" aria-label="Zoom in">+</button>
    <span class="pct">112%</span>
    <svg width="17" height="13" viewBox="0 0 17 13" fill="none" stroke="#605e5c"><path d="M.5.500h16v12H.5z" stroke-width="1.300"/><path d="M3 5V3h2M12 3h2v2M14 8v2h-2M5 10H3V8"/></svg>
    <a href="#update">Update available (click to download)</a>
  </div>
  <div class="tooltip" role="tooltip">Show desktop</div>
</footer>

<footer class="taskbar">
  <div class="weather">
    <svg width="26" height="26" viewBox="0 0 26 26"><circle cx="17" cy="7" r="6" fill="#f38a1d"/><path d="M6 25a5.500 5.500 0 0 1 0-11c1-8 13-8 14 0 7 1 6 11 0 11z" fill="url(#gCloud)"/></svg>
    <div><div>22°C</div><div class="dim">Mostly cloudy</div></div>
  </div>
  <div class="apps">
    <button class="app" aria-label="Start"><svg width="24" height="24"><path d="M0 0h11.500v11.500H0zM12.500 0H24v11.500H12.500zM0 12.500h11.500V24H0zM12.500 12.500H24V24H12.500z" fill="url(#gWin)"/></svg></button>
    <label class="task-search"><svg width="15" height="16" viewBox="0 0 15 16"><circle cx="6.500" cy="6.500" r="5.300" fill="none" stroke="#252423" stroke-width="2"/><path d="M10 11l4 4" stroke="#252423" stroke-width="2"/></svg><input type="text" placeholder="Search" aria-label="Search Windows"><svg width="44" height="26" viewBox="0 0 44 26"><path d="M0 21c6-6 38-6 44 0-6 6-38 6-44 0z" fill="#dcb584"/><path d="M4 8l14-3 4 14-15 3z" fill="#e8f4ea" stroke="#6fae7c"/><path d="M8 11l8-2M9 14l8-2M10 17l7-1" stroke="#9ccba6"/><path d="M21 4l2 2-7 10-2 1v-3z" fill="#f0903c"/><path d="M28 9c0-9 12-9 12 0v12H28z" fill="#1f8bf2"/><path d="M28 14h12v7H28z" fill="#1160cf"/><path d="M31 2c0-3 6-3 6 0" fill="none" stroke="#0d4fa8" stroke-width="1.500"/></svg></label>
    <button class="app" aria-label="Copilot"><svg width="24" height="26" viewBox="0 0 24 26"><path d="M7 2h7c2 0 3 1 3 3h-3c-2 0-3 1-4 4l-2 6c0 2-1 3-3 3-4 0-6-3-4-7l2-6c1-2 2-3 4-3z" fill="url(#gCopA)"/><path d="M17 7h2c3 0 4 2 3 6l-2 5c-1 3-2 4-5 4H9c2 0 3-1 4-4l2-8c0-2 1-3 2-3z" fill="url(#gCopB)"/><path d="M6 18h16v8H6z" fill="#ffc80a"/><text x="14" y="25" text-anchor="middle" class="pre">PRE</text></svg></button>
    <button class="app" aria-label="Task view"><svg width="24" height="24"><path d="M0 7h18v17H0z" fill="#2b2b2b"/><path d="M6 0h18v17H6z" fill="#fff" opacity=".85"/><path d="M6 7h12v10H6z" fill="#bdbdbd"/></svg></button>
    <button class="app" aria-label="Chat"><svg width="24" height="24"><path d="M1 24V12a11 11 0 1 1 11 12z" fill="url(#gChat)"/><path d="M5 7h9v10H5zM15 11l4-3v8l-4-3z" fill="#fff"/></svg></button>
    <button class="app run" aria-label="Brave"><svg width="24" height="26" viewBox="0 0 24 26"><path d="M7 0h10l2 2 2 1v3l1 2-3 12-7 5-7-5L2 8l1-2V3l2-1z" fill="#fb4a1e"/><path d="M6 5l6 1 6-1 1 4-3 6 1 2-5 5-5-5 1-2-3-6z" fill="#fff"/><path d="M8 9l3 1M16 9l-3 1M12 11v5M9 15l3 2 3-2" stroke="#fb4a1e" stroke-width="1.500" fill="none"/></svg></button>
    <button class="app run" aria-label="File Explorer"><svg width="24" height="24"><path d="M0 2h8l3 3v4H0z" fill="#dd9f0c"/><path d="M0 5h24v18H0z" fill="#fdd043"/><path d="M4 23v-5l2-2h12l2 2v5z" fill="#1780d4"/><path d="M8 19h8v1.500H8z" fill="#0c5ba3"/></svg></button>
    <button class="app" aria-label="Edge"><svg width="24" height="24"><circle cx="12" cy="12" r="12" fill="#1266b8"/><path d="M0 12C0-1 18-4 23 7c3 8-3 11-8 9-3-1 1-3-1-6C10 4 2 6 0 12z" fill="url(#gEdge)"/><path d="M8 12c-2 8 6 12 14 7-4 5-13 7-17 0-1-3 1-6 3-7z" fill="#0d4f96"/><path d="M14 10c2 3-2 5 1 6 3 2 7 1 8-2-1 5-6 7-9 5-4-2-3-7 0-9z" fill="#e5e8dc"/></svg></button>
    <button class="app" aria-label="Microsoft Store"><svg width="24" height="24"><path d="M0 5h24v16l-3 3H3l-3-3z" fill="#14508f"/><path d="M6.500 6V1h11v5" fill="none" stroke="#2ba6e8" stroke-width="1.800"/><path d="M7 10h4.500v4.500H7z" fill="#f05133"/><path d="M12.500 10H17v4.500h-4.500z" fill="#7fba00"/><path d="M7 15.500h4.500V20H7z" fill="#2ba6e8"/><path d="M12.500 15.500H17V20h-4.500z" fill="#ffb900"/></svg></button>
    <button class="app" aria-label="Mail"><svg width="24" height="24"><path d="M0 8l12-8 12 8v15H0z" fill="#0f4e94"/><path d="M3 7h18v8H3z" fill="#fff"/><path d="M0 8l12 8 12-8v15H0z" fill="#2394e6"/><path d="M24 23V8L8 18z" fill="#2eb3f2"/></svg></button>
    <button class="app" aria-label="Netflix"><svg width="24" height="25"><path d="M0 0h24v25H0z"/><path d="M6 0h4v25H6zM14 0h4v25h-4z" fill="#b1060f"/><path d="M6 0h4l8 25h-4z" fill="#e50914"/></svg></button>
    <button class="app run" aria-label="Chrome"><svg width="24" height="24"><circle cx="12" cy="12" r="12" fill="#2a9d4a"/><path d="M12 12L1.500 6A12 12 0 0 1 22.500 6z" fill="#e33b2e"/><path d="M12 12V6h10.500A12 12 0 0 1 12 24z" fill="#fbc116"/><path d="M1.500 6l5.500 9 5-3-3-6z" fill="#e33b2e"/><circle cx="12" cy="12" r="5.800" fill="#fff"/><circle cx="12" cy="12" r="4.500" fill="#3b7de8"/></svg></button>
    <button class="app" aria-label="Zoom"><svg width="24" height="25"><rect width="24" height="25" rx="9" fill="#0b5cff"/><text x="12" y="15" text-anchor="middle" class="zm">zoom</text></svg></button>
    <button class="app" aria-label="Microsoft 365"><svg width="22" height="24" viewBox="0 0 22 24"><path d="M2 7l7-5c2-1 3 0 3 2L8 8v6c0 3-2 4-4 4-2-1-3-3-3-5V9z" fill="#7a5bd0"/><path d="M10 2c2-1 3-1 4 0l5 3c2 1 2 2 2 4v4c0 2-3 3-5 2l-2-1V9L9 6z" fill="#3ba4e0"/><path d="M3 17c2 1 4 1 6-1l3-2 3 2c3 1 5 0 6-1 0 2 0 3-2 4l-6 3c-2 1-3 1-4 0z" fill="#a06bc8"/></svg></button>
    <button class="app" aria-label="Anaconda"><svg width="24" height="25"><circle cx="12" cy="12.500" r="10" fill="none" stroke="#3eb02a" stroke-width="4"/><path d="M9 3a10 10 0 0 0-1 18" fill="none" stroke="#e2e6da" stroke-width="1.500" stroke-dasharray="2 2"/></svg></button>
    <button class="app" aria-label="PicPick"><svg width="24" height="24"><circle cx="12" cy="12" r="12" fill="#c03e22"/><path d="M7 7h8c4 0 2 6-1 6h-3M11 7L9 20" fill="none" stroke="#fff" stroke-width="3"/></svg></button>
    <button class="app" aria-label="TeXnicCenter"><svg width="24" height="25"><path d="M1 1h22v23H1z" fill="#fff" stroke="#7b7a00" stroke-width="3"/><text x="12" y="16" text-anchor="middle" class="txc">TXC</text></svg></button>
    <button class="app" aria-label="SQL tools"><svg width="24" height="26" viewBox="0 0 24 26"><path d="M2 3v11c1 4 12 4 13 0V3z" fill="#fdc91f"/><ellipse cx="8.500" cy="3.500" rx="6.500" ry="2.500" fill="#e9a55b"/><path d="M17 1h6v5M1 19v6h6" fill="none" stroke="#3c9f53" stroke-width="2"/><path d="M12 15l8 8M20 14l-8 9M10 16l5-4M18 14l4-1" stroke="#f0741a" stroke-width="2.200"/></svg></button>
    <button class="app" aria-label="VS Code"><svg width="24" height="24"><path d="M17 0l7 3v18l-7 3z" fill="#2aa5ef"/><path d="M17 0v6L3 18l-3-2v-2z" fill="#0a6fbe"/><path d="M17 24v-6L3 6 0 8v2z" fill="#1282d2"/></svg></button>
    <button class="app current" aria-label="Power BI Desktop"><svg width="20" height="25"><path d="M11 0h9v25h-9z" fill="url(#gBi)"/><path d="M5 6h9v19H5z" fill="#f0c22a"/><path d="M0 12h9v13H0z" fill="#f8e07a"/></svg></button>
  </div>
  <div class="tray">
    <svg width="11" height="8"><path d="M1 6.500l4.500-4.500 4.500 4.500" fill="none" stroke="#252423" stroke-width="1.500"/></svg>
    <div class="lang">ENG<br>IN</div>
    <svg width="17" height="13" viewBox="0 0 17 13" fill="none" stroke="#252423" stroke-width="1.200"><path d="M1 5c4-5 11-5 15 0M3.500 7.500c3-3.500 7-3.500 10 0M6 10c1.500-2 3.500-2 5 0"/><circle cx="8.500" cy="11.500" r="1" fill="#252423"/></svg>
    <svg width="17" height="14" viewBox="0 0 17 14" fill="none" stroke="#252423" stroke-width="1.200"><path d="M1 4.500h2.500L7 1v12L3.500 9.500H1zM9.500 5c1 1 1 3 0 4M12 3c2 2 2 6 0 8M14 1c3 3 3 9 0 12"/></svg>
    <svg width="17" height="14" viewBox="0 0 17 14" fill="none" stroke="#252423" stroke-width="1.300"><path d="M6 3.500h8v8H2V9M15.500 6v3"/><path d="M1 4h4M3 1v7" stroke-width="1.800"/></svg>
    <div class="clock">16:46<br>11-10-2023</div>
    <svg width="14" height="16" viewBox="0 0 14 16"><path d="M1 13l1-3V7c0-6 9-6 9 0v3l2 3zM5 14h4l-2 2z" fill="#252423"/><path d="M5 7h3l-3 3h3M10 0h3l-3 3h3" fill="none" stroke="#dcdcdc"/><path d="M10 .500h3l-3 3h3" fill="none" stroke="#252423"/></svg>
    <span class="peek"></span>
  </div>
</footer>
</body>
</html>
```
FILE: styles.css
```css
* { box-sizing: border-box; }
html, body { height: 100%; }
body {
  margin: 0;
  display: flex;
  flex-direction: column;
  min-height: 100vh;
  overflow: hidden;
  background: #f3f2f1;
  color: #252423;
  font: 11px/16px "Noto Sans", "Open Sans", sans-serif;
}
h1, h2, h3, h4, p, ul { margin: 0; padding: 0; font-weight: 400; }
ul { list-style: none; }
svg { display: block; flex: none; overflow: visible; }
button, input { font: inherit; color: inherit; margin: 0; }
input { min-width: 0; padding: 0; border: 0; outline: 0; background: none; }
a { color: inherit; text-decoration: none; }
.defs { position: absolute; width: 0; height: 0; }
.bare { border: 0; padding: 0; background: none; }
.tabs, .card, .legend, .tiles, .y-labels, .pane-head, .viz h3, .filters, .top-search, .data-search, .task-search { font-family: "Open Sans", "Noto Sans", sans-serif; }

/* title bar */
.titlebar {
  flex: none;
  height: 34px;
  display: grid;
  grid-template-columns: 824fr 400px 692fr;
  align-items: center;
  background: #3b3a39;
  color: #fff;
}
.title-left { display: flex; align-items: center; gap: 15px; padding-left: 13px; height: 34px; }
.doc-title { margin-left: -6px; padding-top: 6px; }
.top-search { display: flex; align-items: center; gap: 10px; height: 24px; padding: 0 17px; background: #d2d0ce; color: #252423; border-radius: 2px; }
.top-search input { font-size: 13px; }
.top-search input::placeholder { color: #1b5e4f; opacity: 1; }
.title-right { display: flex; align-items: center; justify-content: flex-end; gap: 10px; padding-right: 17px; }
.win-buttons { display: flex; gap: 33px; margin-left: 22px; }

/* ribbon */
.tabs { flex: none; height: 34px; display: flex; font-size: 13px; padding-left: 2px; }
.tabs a { margin: 0 16px 0 17px; padding-top: 8px; height: 31px; }
.tabs .file { margin-right: 21px; }
.tabs .active { font-weight: 600; border-bottom: 3px solid #117865; }
.ribbon { flex: none; position: relative; z-index: 2; height: 92px; display: flex; box-shadow: 0 1px 4px rgba(0, 0, 0, .3); background: #f3f2f1; }
.group { display: flex; flex-direction: column; justify-content: space-between; height: 89px; margin-top: 2px; padding: 0 7px 0 8px; border-right: 1px solid #c8c6c4; }
.clip { width: 157px; padding: 0 4px; }
.insert { padding: 0 9px 0 6px; }
.group-body { display: flex; }
.group-name { font-size: 10px; line-height: 11px; text-align: center; }
.rb { display: flex; flex-direction: column; align-items: center; min-width: 40px; padding: 6px 3px 0; border: 0; background: none; color: #3b3a39; line-height: 16px; text-align: center; white-space: nowrap; }
.rb > svg { margin-bottom: 2px; }
.tight .rb { padding: 6px 2px 0; }
.off, .mb { color: #a8a6a4; }
.cv { display: inline-block; width: 8px; height: 8px; }
.mini { display: flex; flex-direction: column; gap: 4px; padding: 2px 0 0 4px; }
.mb { display: flex; align-items: center; gap: 3px; height: 20px; padding: 0; border: 0; background: none; white-space: nowrap; }
.collapse { margin: auto 4px 6px auto; }

/* work area */
.work { flex: 1; min-height: 0; display: flex; }
.rail { width: 37px; display: flex; flex-direction: column; align-items: center; gap: 24px; padding: 12px 3px 0 0; border-right: 1px solid #e1dfdd; }
.center { flex: 1; min-width: 0; display: flex; flex-direction: column; }
.stage { flex: 1; min-height: 0; display: flex; }
.canvas {
  flex: 1;
  min-width: 0;
  position: relative;
  overflow: hidden;
  padding: 0 25px 7px;
  background:
    radial-gradient(ellipse 620px 260px at 84% 8%, rgba(92, 88, 98, .6), transparent),
    radial-gradient(ellipse 600px 130px at 76% 66%, rgba(72, 96, 112, .6), transparent),
    radial-gradient(ellipse 800px 240px at 45% 8%, rgba(72, 82, 88, .6), transparent),
    linear-gradient(180deg, #262c32 0, #2a3137 60%, #15181c 80%, #0f1216 100%);
}
.grain { position: absolute; inset: 0; opacity: .6; }
.page { position: relative; height: 100%; padding: 0 1px 0 0; border: 1px dashed #85888b; border-top: 0; }
.row-top { display: grid; grid-template-columns: 572fr 27fr 241fr 37fr 233fr 26fr 286fr; height: 62px; padding-left: 9px; }
.row-top > :nth-child(2) { grid-column: 3; }
.row-top > :nth-child(3) { grid-column: 5; }
.row-top > :nth-child(4) { grid-column: 7; }
.banner { height: 62px; background: #252423; color: #e66c37; font: italic bold 42px/68px "DejaVu Sans", Verdana, sans-serif; text-align: center; white-space: nowrap; }
.card { background: #fff; color: #b0522a; padding: 7px 6px; font-size: 29px; line-height: 40px; font-weight: 700; white-space: nowrap; }
.small { font-size: 23px; line-height: 30px; }
.rule { height: 3px; margin-top: 22px; background: #0f6cc7; }
.row-mid { display: grid; grid-template-columns: 689fr 18fr 724fr; margin-top: 11px; height: 420px; }
.notes { background: #fff; padding: 7px 6px; line-height: 19px; }
.notes p + p { margin-top: 19px; }
.notes b { font-weight: 600; }
.link { height: 3px; margin-top: 379px; background: #0f6cc7; }
.chart { background: #fff; }
.chart h2, .slicer h2, .x-title, .y-title { font-family: Roboto, sans-serif; }
.chart h2 { font-size: 19px; line-height: 24px; text-align: center; }
.chart-body { display: grid; grid-template-columns: 180px 28px 1fr 361px; height: 396px; padding-right: 9px; }
.legend { padding: 0 0 0 5px; font-size: 14px; line-height: 20px; color: #605e5c; }
.legend strong { font-size: 14px; display: block; padding-top: 1px; line-height: 22px; }
.legend ul { height: 283px; display: flex; flex-direction: column; }
.legend li { flex: 1; display: flex; align-items: center; gap: 2px; padding-left: 2px; white-space: nowrap; }
.legend i { width: 11px; height: 11px; border-radius: 50%; }
.y-title { writing-mode: vertical-rl; transform: rotate(180deg); font-size: 16px; line-height: 28px; text-align: center; padding-top: 37px; color: #252423; }
.y-labels { height: 340px; padding: 21px 11px 0 0; display: flex; flex-direction: column; font-size: 13px; color: #605e5c; text-align: right; }
.y-labels li { flex: 1; line-height: 32px; white-space: nowrap; }
.plot { height: 340px; margin-top: 11px; padding: 13px 0 14px; display: flex; flex-direction: column; justify-content: space-between;
  background-image:
    repeating-linear-gradient(180deg, #605e5c 0 7px, #fff 7px 11px),
    repeating-linear-gradient(180deg, #605e5c 0 7px, #fff 7px 11px),
    repeating-linear-gradient(180deg, #605e5c 0 7px, #fff 7px 11px),
    repeating-linear-gradient(180deg, #605e5c 0 7px, #fff 7px 11px);
  background-size: 1px 100%;
  background-position: 0 0, 33.333% 0, 66.667% 0, 100% 0;
  background-repeat: no-repeat;
}
.bar { height: 26px; flex: none; color: #fff; font-size: 12px; line-height: 28px; text-align: center; }
.ticks { display: flex; justify-content: space-between; margin: 3px -6px 0; font-size: 12px; line-height: 16px; color: #605e5c; }
.ticks span { width: 12px; text-align: center; }
.x-title { font-size: 16px; line-height: 20px; text-align: center; padding-top: 2px; }
.c1 { background: #118dff; } .c2 { background: #12239e; } .c3 { background: #e66c37; } .c4 { background: #6b007b; } .c5 { background: #e044a7; }
.c6 { background: #744ec2; } .c7 { background: #d9b300; } .c8 { background: #d64550; } .c9 { background: #197278; } .c10 { background: #1aab40; }

.slicer { margin: 37px 3px 0 9px; height: 250px; background: #fff; padding-left: 14px; }
.slicer h2 { font-size: 16px; line-height: 26px; padding-top: 2px; }
.slicer-body { display: flex; align-items: center; padding-left: 15px; gap: 10px; }
.tiles { flex: 1; display: grid; grid-auto-flow: column; grid-template-rows: repeat(3, 69px); grid-template-columns: repeat(9, 1fr); gap: 4px 2px; }
.tiles button { border: 1px solid #605e5c; padding: 0 2px; background: #fff; color: #605e5c; font-size: 14px; line-height: 19px; white-space: nowrap; box-shadow: inset 0 0 0 1px #e8e8e8; }
.next { margin-right: 6px; }

.filters { width: 33px; display: flex; flex-direction: column; align-items: center; background: #fff; border-right: 1px solid #e1dfdd; padding-top: 12px; border-left: 1px solid #c8c6c4; }
.flip { transform: scaleX(-1); margin-bottom: 15px; }
.filters span { writing-mode: vertical-rl; margin-top: 7px; font-size: 15px; font-weight: 600; line-height: 20px; }
.page-tabs { flex: none; height: 35px; display: flex; align-items: center; border-right: 1px solid #e1dfdd; padding-left: 6px; }
.page-tabs > .bare { margin-right: 16px; }
.page-tabs > .bare + .bare { margin-right: 8px; }
.page-tab { width: 121px; height: 35px; border: 0; border-bottom: 4px solid #117865; background: #fff; padding: 2px 0 0; }
.add-page { width: 39px; height: 32px; border: 0; padding: 0; background: #117865; display: flex; align-items: center; justify-content: center; }

/* panes */
.pane { width: 181px; border-right: 1px solid #e1dfdd; }
.data { border: 0; }
.pane-head { display: flex; align-items: center; justify-content: space-between; height: 38px; padding: 0 8px 0 9px; }
.pane-head h2 { font-size: 15px; font-weight: 600; line-height: 20px; }
.viz h3 { font-size: 12px; line-height: 16px; padding: 0 0 3px 9px; }
.modes { display: flex; gap: 34px; padding-left: 9px; }
.mode { width: 32px; height: 32px; padding: 0; border: 0; background: none; display: flex; align-items: center; justify-content: center; border-radius: 2px; }
.on { background: #d2d0ce; }
.notch { height: 9px; margin-top: 4px; padding-left: 17px; border-bottom: 1px solid #8a8886; }
.gallery { display: grid; grid-template-columns: repeat(6, 19px); gap: 9px; padding: 11px 0 8px 11px; border-bottom: 1px solid #e1dfdd; }
.gallery svg { width: 19px; height: 19px; }
.n123 { font: 600 8px "Open Sans", sans-serif; fill: #0f78cc; stroke: none; }
.nR { font: 700 15px "Open Sans", sans-serif; fill: #2b88c8; }
.wells { padding: 9px 6px 0 5px; }
.wells h4 { padding-left: 8px; line-height: 16px; font-weight: 600; color: #3b3a39; }
.wells .plain { font-weight: 400; }
.well { height: 28px; margin: 5px 0 11px; padding: 0 10px; border: 1px dashed #c8c6c4; background: #fff; line-height: 26px; white-space: nowrap; }
.low { margin-top: 4px; padding: 0 8px; }
.tg { position: relative; display: flex; align-items: center; justify-content: space-between; height: 27px; padding-left: 8px; }
.wells h4 + .tg { margin-top: 3px; }
.tg input { position: absolute; right: 0; width: 32px; height: 16px; opacity: 0; }
.sw { width: 32px; height: 16px; border: 1px solid #605e5c; border-radius: 8px; background: #fff; display: flex; align-items: center; justify-content: space-between; padding: 0 3px 0 4px; font-size: 9px; line-height: 14px; color: #605e5c; }
.sw::before { content: ""; width: 8px; height: 8px; border-radius: 50%; background: #605e5c; }
input:checked + .sw { background: #605e5c; color: #fff; flex-direction: row-reverse; font-weight: 600; }
input:checked + .sw::before { background: #fff; }
.data-search { display: flex; align-items: center; gap: 5px; margin: 7px 4px 0 5px; height: 27px; padding: 0 7px; background: #fff; border: 1px solid #605e5c; border-radius: 2px; }
.data-search input { font-size: 13px; width: 100px; }
.data-search input::placeholder, .task-search input::placeholder { color: #605e5c; opacity: 1; }
.tree { display: flex; align-items: center; gap: 5px; padding: 12px 0 0 11px; color: #3b3a39; line-height: 18px; }

/* status bar */
.status { flex: none; position: relative; height: 24px; display: flex; align-items: center; justify-content: space-between; padding: 0 5px 0 1px; border-top: 1px solid #e1dfdd; color: #484644; }
.status-right { display: flex; align-items: center; white-space: nowrap; }
.status-right input { appearance: none; width: 100px; height: 12px; margin: 0 6px; background: linear-gradient(#605e5c, #605e5c) center / 100% 1px no-repeat; }
.status-right input::-webkit-slider-thumb { appearance: none; width: 4px; height: 12px; background: #605e5c; }
.sign { font-size: 13px; font-weight: 600; }
.pct { margin: 0 17px 0 14px; }
.status-right a { margin-left: 20px; }
.tooltip { position: absolute; right: 1px; bottom: 12px; width: 95px; height: 30px; border-radius: 4px; background: #f9f9f9; box-shadow: 0 0 4px rgba(0, 0, 0, .3); color: #252423; line-height: 30px; text-align: center; z-index: 3; }

/* Windows taskbar */
.taskbar {
  flex: none;
  height: 48px;
  display: grid;
  grid-template-columns: 1fr auto 1fr;
  align-items: center;
  padding-bottom: 1px;
  border-top: 1px solid #b4b4b4;
  background: linear-gradient(90deg, #dadada 0 22%, #e4e6da 38%, #e8eadd 52%, #dadada 66%);
}
.weather { display: flex; align-items: center; gap: 6px; padding-left: 14px; }
.dim { color: #555; }
.apps { display: flex; align-items: center; }
.app { position: relative; width: 44px; height: 46px; padding: 0; border: 0; background: none; display: flex; align-items: center; justify-content: center; }
.run::after, .current::after { content: ""; position: absolute; bottom: 4px; left: 19px; width: 6px; height: 3px; border-radius: 2px; background: #8a8a8a; }
.current::before { content: ""; position: absolute; inset: 4px 3px 3px; border-radius: 4px; background: #eee; box-shadow: 0 0 1px rgba(0, 0, 0, .4); }
.current::after { left: 14px; width: 16px; background: #5f7889; }
.current svg { position: relative; }
.task-search { display: flex; align-items: center; width: 218px; height: 32px; margin: 0 3px; padding: 0 5px 0 11px; border-radius: 16px; background: #f6f6f5; box-shadow: 0 0 1px rgba(0, 0, 0, .5); gap: 10px; }
.task-search input { flex: 1; font-size: 13px; }
.pre { font: 700 7px Roboto, sans-serif; fill: #252423; }
.zm { font: 700 7px "Open Sans", sans-serif; fill: #fff; }
.txc { font: italic 700 9px "Open Sans", sans-serif; fill: #5c5b00; }
.tray { display: flex; align-items: center; justify-content: flex-end; gap: 8px; }
.lang { text-align: center; margin: 0 14px; }
.clock { text-align: right; margin-left: 6px; }
.peek { width: 1px; height: 16px; margin: 0 5px 0 10px; background: #8a8a8a; }
```
